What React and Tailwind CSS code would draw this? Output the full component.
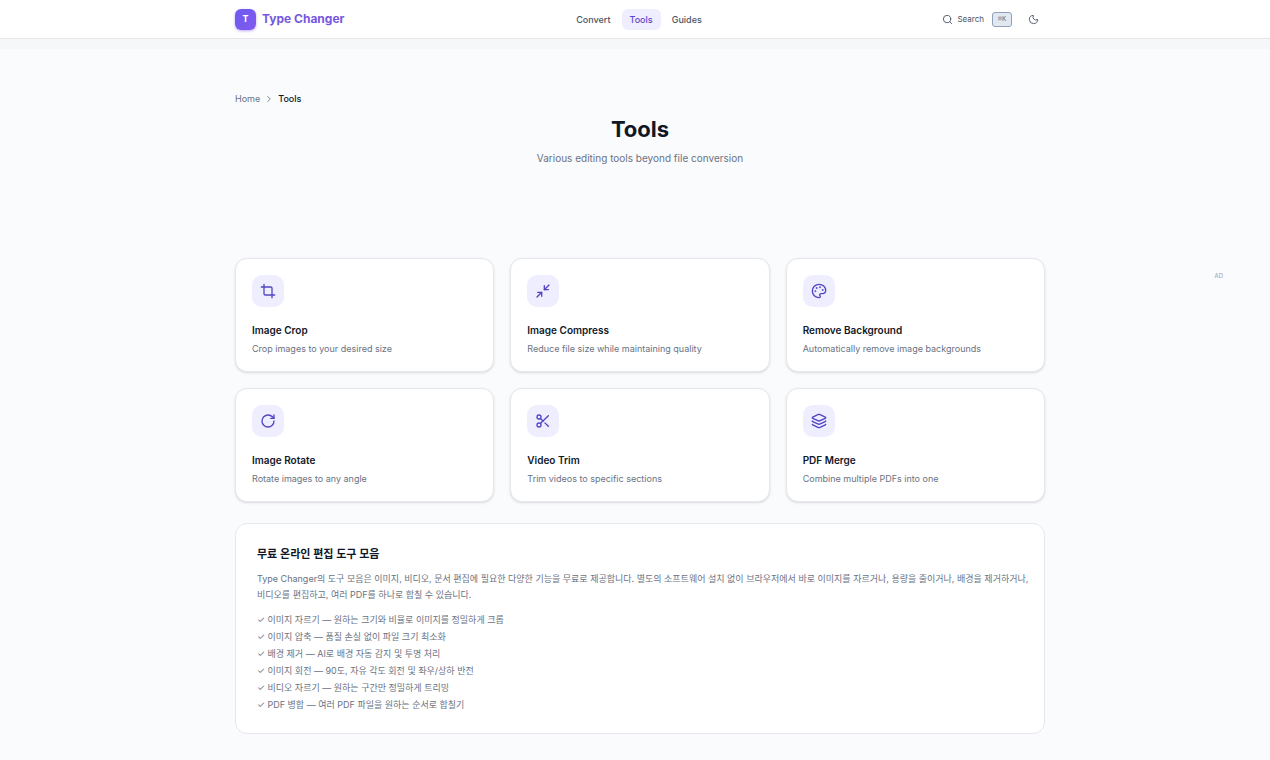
import {
  ChevronRight,
  Crop,
  Layers,
  Minimize2,
  Moon,
  Palette,
  RotateCw,
  Scissors,
  Search,
} from "lucide-react";

const tools = [
  { icon: Crop, title: "Image Crop", text: "Crop images to your desired size" },
  { icon: Minimize2, title: "Image Compress", text: "Reduce file size while maintaining quality" },
  { icon: Palette, title: "Remove Background", text: "Automatically remove image backgrounds" },
  { icon: RotateCw, title: "Image Rotate", text: "Rotate images to any angle" },
  { icon: Scissors, title: "Video Trim", text: "Trim videos to specific sections" },
  { icon: Layers, title: "PDF Merge", text: "Combine multiple PDFs into one" },
];

const features = [
  "이미지 자르기 — 원하는 크기와 비율로 이미지를 정밀하게 크롭",
  "이미지 압축 — 품질 손실 없이 파일 크기 최소화",
  "배경 제거 — AI로 배경 자동 감지 및 투명 처리",
  "이미지 회전 — 90도, 자유 각도 회전 및 좌우/상하 반전",
  "비디오 자르기 — 원하는 구간만 정밀하게 트리밍",
  "PDF 병합 — 여러 PDF 파일을 원하는 순서로 합칠기",
];

function Header() {
  return (
    <header className="border-b border-gray-200 bg-white pl-2.5 shadow-xs">
      <div className="mx-auto grid h-[38px] max-w-[810px] grid-cols-[1fr_auto_1fr] items-center">
        <a href="#" className="flex items-center gap-1.5 text-[12px] font-bold text-[#7557e0]">
          <span className="flex size-[21px] items-center justify-center rounded-md bg-linear-to-br from-[#6c5cf0] to-[#8257ee] text-[9px] text-white shadow-sm shadow-violet-300">
            T
          </span>
          Type Changer
        </a>
        <nav className="flex items-center gap-[3px] pr-0.5 text-[9px] leading-[15px] font-medium text-gray-600">
          <a href="#" className="rounded-md px-2 py-[3px]">Convert</a>
          <a href="#" aria-current="page" className="rounded-md bg-[#eeeefe] px-2 py-[3px] text-[#5b48c9]">
            Tools
          </a>
          <a href="#" className="rounded-md px-2 py-[3px]">Guides</a>
        </nav>
        <div className="flex items-center justify-end gap-4 pr-1.5">
          <button type="button" className="flex items-center text-[8px] text-gray-600">
            <Search className="mr-1 size-[11px]" />
            Search
            <kbd className="ml-2 flex h-[15px] w-5 items-center justify-center rounded-[3px] border border-slate-400 bg-slate-200 font-['Liberation_Mono','DejaVu_Sans_Mono',monospace] text-[7px] text-slate-500">
              ⌘K
            </kbd>
          </button>
          <button type="button" aria-label="Toggle theme" className="text-gray-600">
            <Moon className="size-[11px]" />
          </button>
        </div>
      </div>
    </header>
  );
}

function ToolCard({ icon: Icon, title, text }) {
  return (
    <a href="#" className="rounded-xl border border-gray-200 bg-white p-4 shadow-sm">
      <span className="flex size-8 items-center justify-center rounded-[10px] bg-[#eeeefe] text-[#5145c4]">
        <Icon className="size-4" />
      </span>
      <h2 className="mt-[15px] text-[10px] leading-4 font-semibold text-gray-900">{title}</h2>
      <p className="mt-1 text-[9px] leading-[13px] text-gray-500">{text}</p>
    </a>
  );
}

export default function App() {
  return (
    <div className="min-h-screen bg-[#fafbfd] font-['Inter','Noto_Sans_CJK_KR',sans-serif] text-gray-900">
      <Header />
      <div className="h-2.5 bg-[#f5f7f9]" />
      <div className="grid grid-cols-[1fr_minmax(0,810px)_1fr] pt-[42px] pb-[25px] pl-2.5">
        <main className="col-start-2">
          <nav aria-label="Breadcrumb" className="flex items-center gap-1 text-[9px] leading-4 text-gray-500">
            <a href="#">Home</a>
            <ChevronRight className="size-[10px]" />
            <span className="font-medium text-gray-900">Tools</span>
          </nav>
          <h1 className="mt-1.5 text-center text-[22px] leading-8 font-bold">Tools</h1>
          <p className="mt-[5px] text-center text-[10px] leading-4 text-gray-500">
            Various editing tools beyond file conversion
          </p>
          <section className="mt-[92px] grid grid-cols-3 gap-4">
            {tools.map((tool) => (
              <ToolCard key={tool.title} {...tool} />
            ))}
          </section>
          <section
            lang="ko"
            className="mt-[21px] rounded-xl border border-gray-200 bg-white pt-[21px] pr-3 pb-[22px] pl-[21px] text-[9px] break-keep text-gray-500"
          >
            <h2 className="text-[11px] leading-[18px] font-semibold text-gray-900">
              무료 온라인 편집 도구 모음
            </h2>
            <p className="mt-2 leading-4">
              Type Changer의 도구 모음은 이미지, 비디오, 문서 편집에 필요한 다양한 기능을 무료로 제공합니다. 별도의 소프트웨어
              설치 없이 브라우저에서 바로 이미지를 자르거나, 용량을 줄이거나, 배경을 제거하거나, 비디오를 편집하고, 여러 PDF를
              하나로 합칠 수 있습니다.
            </p>
            <ul className="mt-2.5 flex flex-col gap-1">
              {features.map((feature) => (
                <li key={feature} className="leading-[13px]">✓ {feature}</li>
              ))}
            </ul>
          </section>
        </main>
        <aside className="flex justify-end pt-[179px] pr-[47px] text-[6px] leading-3 text-gray-400">AD</aside>
      </div>
    </div>
  );
}
